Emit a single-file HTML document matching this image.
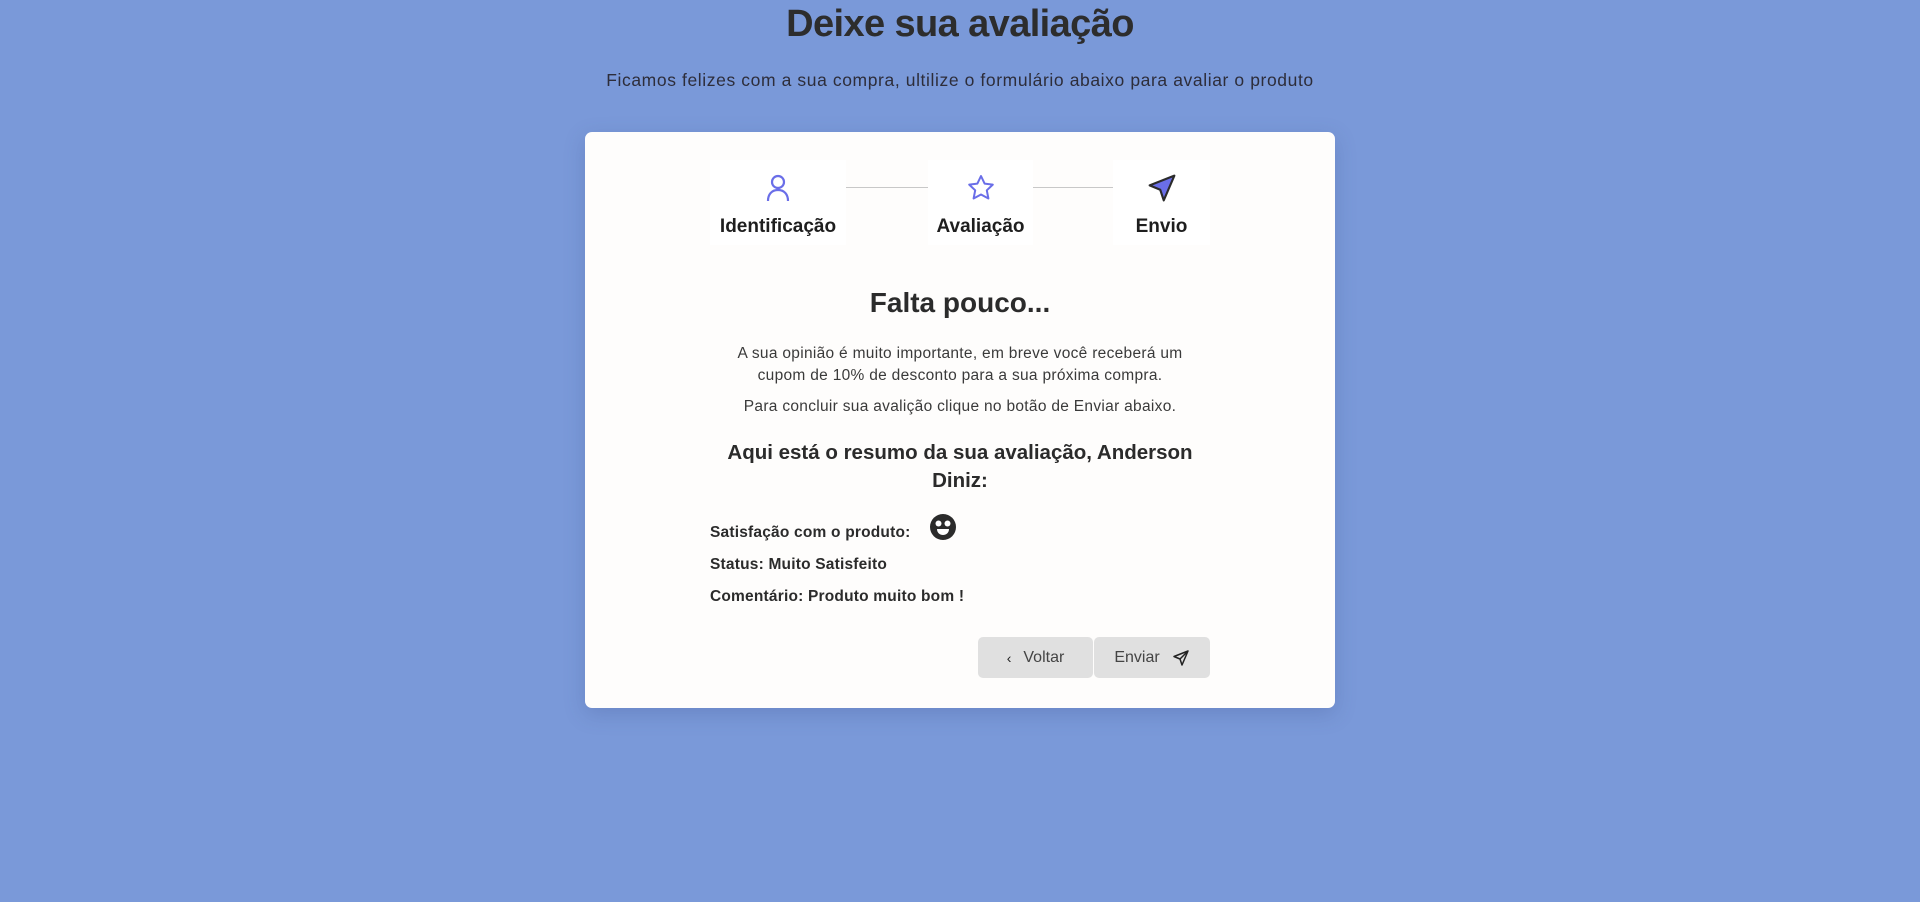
<!DOCTYPE html>
<html><head><meta charset="utf-8"><style>
*{margin:0;padding:0;box-sizing:border-box}
body{width:1920px;height:902px;background:#7a99d9;font-family:"Liberation Sans",sans-serif;color:#2b2b2b;position:relative;overflow:hidden}
.a{position:absolute}
h1{position:absolute;left:0;width:1920px;top:3px;text-align:center;font-size:38px;font-weight:bold;color:#2d2d2d;letter-spacing:-0.6px}
.sub{left:0;width:1920px;top:70px;text-align:center;font-size:17.5px;color:#2d2d3a;letter-spacing:0.6px}
.card{left:585px;top:132px;width:750px;height:576px;background:#fefdfc;border-radius:7px;box-shadow:0 6px 20px rgba(60,80,140,.25)}
.step{background:#fff;text-align:center;font-weight:bold;font-size:19px;color:#1e1e1e}
.line{height:1px;background:#c8c8c8;top:187px}
.c{left:710px;width:500px;text-align:center}
.p{font-size:15.5px;color:#3a3a3a;line-height:22px;letter-spacing:0.3px}
.b{font-weight:bold;font-size:15.5px;left:710px;color:#2b2b2b;letter-spacing:0.2px}
.btn{background:#e0e0e0;border-radius:5px;height:41px;top:637px;font-size:16px;color:#444;display:flex;align-items:center;justify-content:center;gap:12px}
</style></head><body>
<h1>Deixe sua avaliação</h1>
<div class="a sub">Ficamos felizes com a sua compra, ultilize o formulário abaixo para avaliar o produto</div>
<div class="a card"></div>
<div class="a line" style="left:846px;width:82px"></div>
<div class="a line" style="left:1033px;width:80px"></div>
<div class="a step" style="left:710px;top:160px;width:136px;height:85px">
<svg width="28" height="30" viewBox="0 0 28 30" style="margin-top:13px"><circle cx="14" cy="9" r="6" fill="none" stroke="#6a6ee8" stroke-width="2.2"/><path d="M4 28c0-7 4-11 10-11s10 4 10 11" fill="none" stroke="#6a6ee8" stroke-width="2.2"/></svg>
<div style="margin-top:7px">Identificação</div></div>
<div class="a step" style="left:928px;top:160px;width:105px;height:85px">
<svg width="30" height="30" viewBox="0 0 30 30" style="margin-top:13px"><path d="M15 3l3.6 7.6 8.2 1-6 5.7 1.6 8.2L15 21.5l-7.4 4 1.6-8.2-6-5.7 8.2-1z" fill="none" stroke="#6a6ee8" stroke-width="2" stroke-linejoin="round"/></svg>
<div style="margin-top:7px">Avaliação</div></div>
<div class="a step" style="left:1113px;top:160px;width:97px;height:85px">
<svg width="30" height="30" viewBox="0 0 34 34" style="margin-top:13px"><path d="M31 3L3 14l12 5 4 12z" fill="#6a6ee8" stroke="#2b2b2b" stroke-width="2.4" stroke-linejoin="round"/></svg>
<div style="margin-top:7px">Envio</div></div>
<div class="a c" style="top:287px;font-size:28px;font-weight:bold;color:#2b2b2b">Falta pouco...</div>
<div class="a c p" style="top:343px">A sua opinião é muito importante, em breve você receberá um<br>cupom de 10% de desconto para a sua próxima compra.</div>
<div class="a c p" style="top:396px">Para concluir sua avalição clique no botão de Enviar abaixo.</div>
<div class="a c" style="top:439px;font-size:20.5px;font-weight:bold;line-height:28px;padding:0 5px">Aqui está o resumo da sua avaliação, Anderson Diniz:</div>
<div class="a b" style="top:524px">Satisfação com o produto:</div>
<svg class="a" style="left:929px;top:513px" width="28" height="28" viewBox="0 0 28 28"><circle cx="14" cy="14" r="13" fill="#2b2b2b"/><circle cx="9.5" cy="10.5" r="3" fill="#fff"/><circle cx="18.5" cy="10.5" r="3" fill="#fff"/><path d="M8 16h12c0 4-3 6-6 6s-6-2-6-6z" fill="#fff"/></svg>
<div class="a b" style="top:556px">Status: Muito Satisfeito</div>
<div class="a b" style="top:588px">Comentário: Produto muito bom !</div>
<div class="a btn" style="left:978px;width:115px"><span style="font-size:14px;color:#222">&#8249;</span><span>Voltar</span></div>
<div class="a btn" style="left:1094px;width:116px"><span>Enviar</span><svg width="18" height="18" viewBox="0 0 18 18"><path d="M16 2L2 7.5l6 2.5 2 6z M8 10l8-8" fill="none" stroke="#222" stroke-width="1.5" stroke-linejoin="round"/></svg></div>
</body></html>
